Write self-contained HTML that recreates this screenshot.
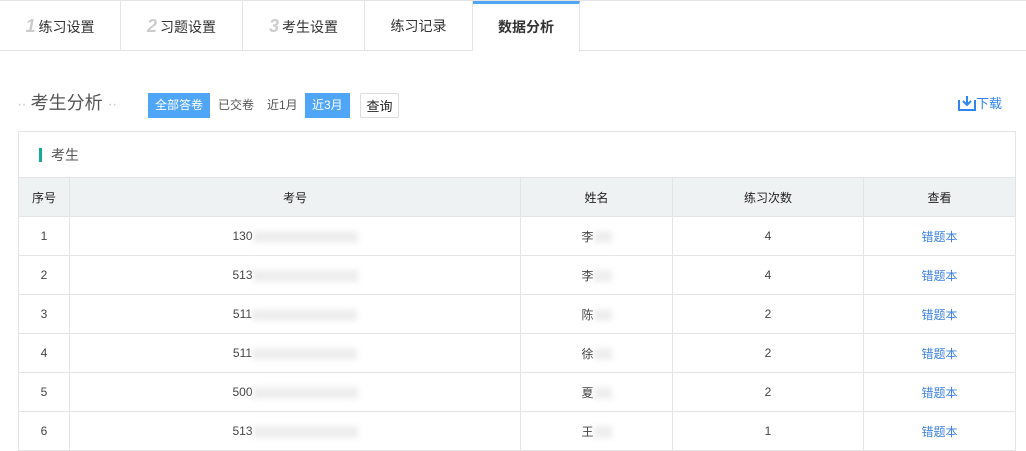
<!DOCTYPE html><html><head><meta charset="utf-8"><style>
*{margin:0;padding:0;box-sizing:border-box}
body{width:1026px;height:438px;overflow:hidden;background:#fff;font-family:"Liberation Sans","Noto Sans CJK SC",sans-serif;font-size:13px;color:#333;position:relative}
.tabs{position:absolute;left:0;top:0;width:1026px;height:51px;border-top:1px solid #e4e4e4;border-bottom:1px solid #e4e4e4}
.tab{position:absolute;top:0;height:50px;line-height:50px;text-align:center;border-right:1px solid #e4e4e4;font-size:14px;color:#333}
.tab i{font-style:italic;font-weight:bold;color:#ccc;font-size:18px;margin-right:3px}
.tab.act{border-top:3px solid #4fa6f7;line-height:46px;font-weight:bold;height:51px;background:#fff}
.tb{position:absolute;top:93px;height:25px;line-height:25px;font-size:12px}
.blue{background:#4fa6f7;color:#fff;padding:0 7px}
table{position:absolute;left:18px;top:177px;border-collapse:collapse;width:998px}
td,th{border:1px solid #e4e4e4;height:39px;text-align:center;font-size:12px;color:#333}
th{background:#eff2f3;font-weight:normal;color:#222}
td{color:#444}
a{color:#3b82e0;text-decoration:none}
.bl{display:inline-block;vertical-align:middle;height:12px;background:#e2e2e2;filter:blur(3px);opacity:.6}
.dot{color:#ccc;font-size:16px;letter-spacing:-1px}
</style></head><body>
<div class="tabs">
<div class="tab" style="left:0;width:121px"><i>1</i>练习设置</div>
<div class="tab" style="left:121px;width:122px"><i>2</i>习题设置</div>
<div class="tab" style="left:243px;width:122px"><i>3</i>考生设置</div>
<div class="tab" style="left:365px;width:108px">练习记录</div>
<div class="tab act" style="left:473px;width:107px">数据分析</div>
</div>
<div class="tb" style="left:17px;font-size:18px;color:#555;top:91px"><span class="dot">··</span> 考生分析 <span class="dot">··</span></div>
<div class="tb blue" style="left:148px;width:62px">全部答卷</div>
<div class="tb" style="left:218px;color:#555">已交卷</div>
<div class="tb" style="left:267px;color:#555">近1月</div>
<div class="tb blue" style="left:305px;width:45px">近3月</div>
<div class="tb" style="left:360px;width:39px;border:1px solid #ddd;border-radius:2px;text-align:center;color:#222;font-size:13px">查询</div>
<div class="tb" style="left:958px;color:#2f86f0;font-size:13px;top:91px"><svg width="18" height="16" viewBox="0 0 18 16" style="vertical-align:-3px"><path d="M1 5v10h16V5" fill="none" stroke="#2f86f0" stroke-width="2"/><path d="M9 1v9M5 6l4 4 4-4" fill="none" stroke="#2f86f0" stroke-width="2"/></svg>下载</div>
<div style="position:absolute;left:18px;top:131px;width:998px;height:47px;border:1px solid #e4e4e4;border-bottom:none"><div style="position:absolute;left:20px;top:16px;width:3px;height:14px;background:#17a99a"></div><div style="position:absolute;left:32px;top:13px;font-size:14px;color:#555">考生</div></div>
<table>
<tr><th style="width:51px">序号</th><th style="width:451px">考号</th><th style="width:152px">姓名</th><th style="width:191px">练习次数</th><th>查看</th></tr>
<tr><td>1</td><td>130<span class="bl" style="width:105px"></span></td><td>李<span class="bl" style="width:18px"></span></td><td>4</td><td><a>错题本</a></td></tr>
<tr><td>2</td><td>513<span class="bl" style="width:105px"></span></td><td>李<span class="bl" style="width:18px"></span></td><td>4</td><td><a>错题本</a></td></tr>
<tr><td>3</td><td>511<span class="bl" style="width:105px"></span></td><td>陈<span class="bl" style="width:18px"></span></td><td>2</td><td><a>错题本</a></td></tr>
<tr><td>4</td><td>511<span class="bl" style="width:105px"></span></td><td>徐<span class="bl" style="width:18px"></span></td><td>2</td><td><a>错题本</a></td></tr>
<tr><td>5</td><td>500<span class="bl" style="width:105px"></span></td><td>夏<span class="bl" style="width:18px"></span></td><td>2</td><td><a>错题本</a></td></tr>
<tr><td>6</td><td>513<span class="bl" style="width:105px"></span></td><td>王<span class="bl" style="width:18px"></span></td><td>1</td><td><a>错题本</a></td></tr>
</table>
</body></html>
